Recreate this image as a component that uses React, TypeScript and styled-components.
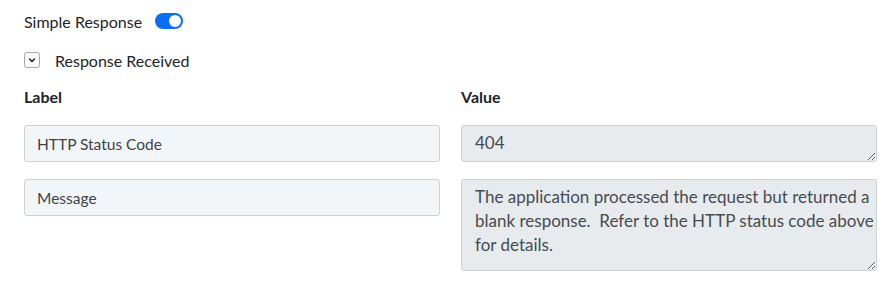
import React from "react";
import styled, { createGlobalStyle } from "styled-components";

const GlobalStyle = createGlobalStyle`
  body {
    margin: 0;
    background: #ffffff;
    font-family: Lato, "Open Sans", sans-serif;
    color: #1f2326;
  }
`;

const Page = styled.div`
  padding: 10px 19px 0 24px;
  display: flex;
  flex-direction: column;
`;

const ToggleRow = styled.div`
  display: flex;
  align-items: center;
  gap: 13px;
  height: 22px;
  font-size: 16px;
`;

const Switch = styled.div`
  width: 28px;
  height: 16px;
  border-radius: 8px;
  background: #0b6ef5;
  position: relative;

  &::after {
    content: "";
    position: absolute;
    right: 2px;
    top: 2px;
    width: 12px;
    height: 12px;
    border-radius: 50%;
    background: #ffffff;
  }
`;

const SectionRow = styled.div`
  display: flex;
  align-items: center;
  gap: 15px;
  margin-top: 17px;
  height: 22px;
  font-size: 16px;
`;

const ChevronBox = styled.div`
  width: 14px;
  height: 14px;
  border: 1px solid #a3a9af;
  border-radius: 3px;
  display: flex;
  align-items: center;
  justify-content: center;
`;

const Grid = styled.div`
  display: grid;
  grid-template-columns: 416px 416px;
  column-gap: 21px;
  row-gap: 17px;
  margin-top: 15px;
`;

const Header = styled.div`
  font-size: 16px;
  font-weight: 700;
  height: 22px;
  line-height: 21px;
`;

const Field = styled.input`
  box-sizing: border-box;
  width: 100%;
  height: 37px;
  padding: 0 12px;
  border: 1px solid #cdd1d6;
  border-radius: 3px;
  background: #f3f6f9;
  font-family: Lato, "Open Sans", sans-serif;
  font-size: 15.5px;
  color: #3e4347;
  outline: none;
`;

const Area = styled.textarea<{ $h: number }>`
  box-sizing: border-box;
  display: block;
  width: 100%;
  height: ${(p) => p.$h}px;
  padding: 5px 2px 5px 13px;
  border: 1px solid #cdd1d6;
  border-radius: 3px;
  background: #e8ebee;
  font-family: Lato, "Open Sans", sans-serif;
  font-size: 17px;
  line-height: 24px;
  color: #464b50;
  outline: none;
  resize: vertical;
  overflow: hidden;
`;

export default function App() {
  return (
    <>
      <GlobalStyle />
      <Page>
        <ToggleRow>
          <span>Simple Response</span>
          <Switch />
        </ToggleRow>
        <SectionRow>
          <ChevronBox>
            <svg width="10" height="10" viewBox="0 0 10 10">
              <path d="M2.5 4 L5 6.5 L7.5 4" fill="none" stroke="#1f2326" strokeWidth="1.5" strokeLinecap="round" strokeLinejoin="round" />
            </svg>
          </ChevronBox>
          <span>Response Received</span>
        </SectionRow>
        <Grid>
          <Header>Label</Header>
          <Header>Value</Header>
          <Field readOnly value="HTTP Status Code" />
          <Area readOnly $h={37} value="404" />
          <Field readOnly value="Message" />
          <Area
            readOnly
            $h={92}
            value="The application processed the request but returned a blank response.  Refer to the HTTP status code above for details."
          />
        </Grid>
      </Page>
    </>
  );
}
